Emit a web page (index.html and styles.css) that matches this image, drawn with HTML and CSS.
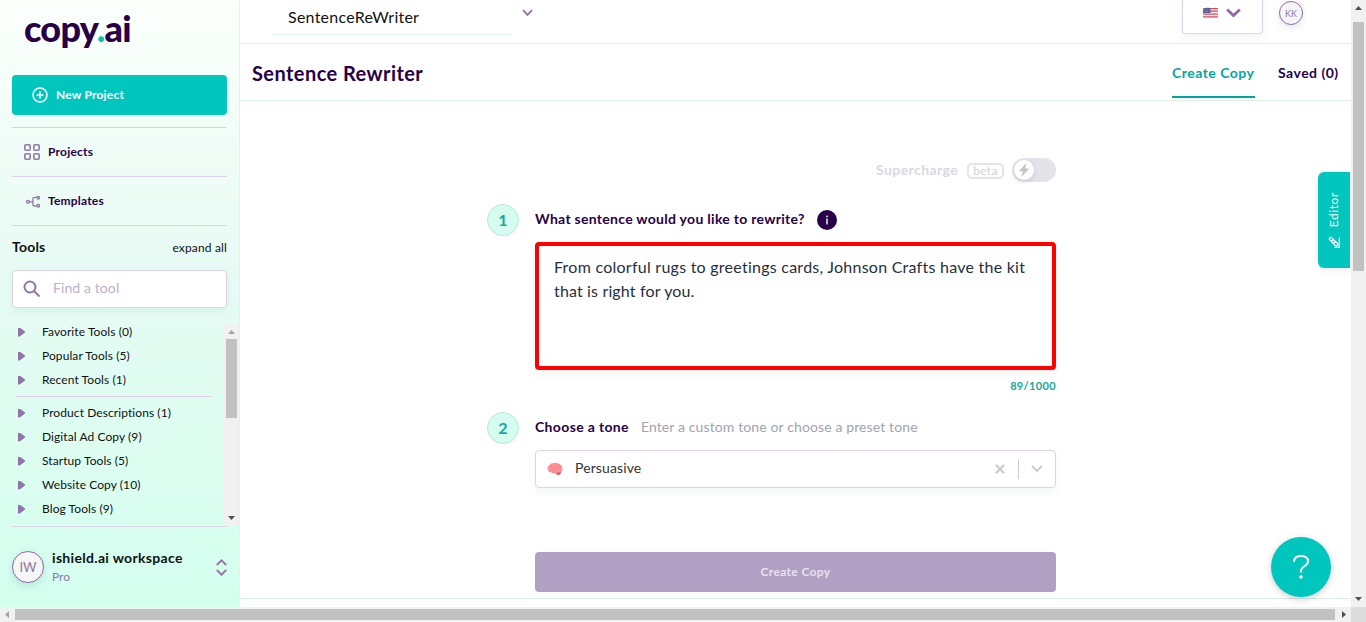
FILE: index.html
```html
<!DOCTYPE html>
<html lang="en">
<head>
<meta charset="utf-8">
<title>Sentence Rewriter</title>
<link rel="stylesheet" href="styles.css">
</head>
<body>
<div class="app">
  <aside class="sidebar">
    <div class="logo">copy<span class="logo-dot">.</span>ai</div>
    <button class="new-project">
      <svg width="16" height="16" viewBox="0 0 16 16" fill="none" stroke="#fff" stroke-width="1.5"><circle cx="8" cy="8" r="7"/><path d="M8 4.6v6.8M4.6 8h6.8"/></svg>
      <span class="t-new">New Project</span>
    </button>
    <nav class="nav">
      <a class="nav-item">
        <svg width="16" height="16" viewBox="0 0 16 16" fill="none" stroke="#8f77a5" stroke-width="1.6"><rect x=".8" y=".8" width="5.4" height="5.4" rx="1.3"/><rect x="9.8" y=".8" width="5.4" height="5.4" rx="1.3"/><rect x=".8" y="9.8" width="5.4" height="5.4" rx="1.3"/><rect x="9.8" y="9.8" width="5.4" height="5.4" rx="1.3"/></svg>
        <span class="t-projects">Projects</span>
      </a>
      <a class="nav-item">
        <svg width="16" height="16" viewBox="0 0 16 16" fill="none" stroke="#8f77a5" stroke-width="1.3"><circle cx="4" cy="8.8" r="1.4"/><circle cx="14.2" cy="4.8" r="1.3"/><circle cx="14.2" cy="12.7" r="1.3"/><path d="M5.4 8.800h3.400M12.800 4.400h-2.200q-1.700 0-1.700 1.700v5.200q0 1.700 1.700 1.700h2.200"/></svg>
        <span class="t-templates">Templates</span>
      </a>
    </nav>
    <div class="tools-head"><span class="tools-title">Tools</span><span class="expand">expand all</span></div>
    <div class="search">
      <svg width="18" height="18" viewBox="0 0 18 18" fill="none" stroke="#8f77a5" stroke-width="2"><circle cx="7" cy="7" r="5.500"/><path d="M11 11l5.500 5.500"/></svg>
      <span class="t-find">Find a tool</span>
    </div>
    <div class="tool-area">
      <ul class="tool-list">
        <li>Favorite Tools (0)</li>
        <li>Popular Tools (5)</li>
        <li>Recent Tools (1)</li>
        <li class="sep"></li>
        <li>Product Descriptions (1)</li>
        <li>Digital Ad Copy (9)</li>
        <li>Startup Tools (5)</li>
        <li>Website Copy (10)</li>
        <li>Blog Tools (9)</li>
      </ul>
      <div class="list-scroll">
        <svg width="15" height="15" viewBox="0 0 15 15"><path d="M4 10h7L7.5 6z" fill="#a3a3a3"/></svg>
        <div class="list-thumb"></div>
        <svg class="push" width="15" height="15" viewBox="0 0 15 15"><path d="M4 5h7L7.5 9z" fill="#505050"/></svg>
      </div>
    </div>
    <div class="workspace">
      <div class="avatar">IW</div>
      <div class="ws-text"><div class="ws-name">ishield.ai workspace</div><div class="ws-plan">Pro</div></div>
      <svg width="11" height="17" viewBox="0 0 11 17" fill="none" stroke="#8f77a5" stroke-width="1.8"><path d="M.8 6L5.5 1.3 10.2 6M.8 11l4.7 4.7L10.2 11"/></svg>
    </div>
  </aside>
  <main class="main">
    <header class="topbar">
      <div class="project-name">SentenceReWriter</div>
      <svg class="name-caret" width="11" height="8" viewBox="0 0 11 8" fill="none" stroke="#8f77a5" stroke-width="1.9"><path d="M1 1.2l4.5 4.6L10 1.2"/></svg>
      <div class="lang">
        <svg width="15" height="12" viewBox="0 0 15 12"><path d="M0 1.5Q4 .2 7.5 1T15 .8V10.8Q11 12 7.5 11T0 11.5z" fill="#f3e9ec"/><path d="M7 1.6h8M7 4.2h8M0 7.2h15M0 9.8h15" stroke="#cf5264" stroke-width="1.3"/><path d="M0 1.4Q4 .2 7.5 1V6H0z" fill="#5a5a90"/><path d="M1 2.8h5.5M1 4.5h5.5" stroke="#b9b6d0" stroke-width=".6" stroke-dasharray=".8 .8"/></svg>
        <svg width="15" height="10" viewBox="0 0 15 10" fill="none" stroke="#8f6aa6" stroke-width="2.8"><path d="M1.2 1.5l6.3 6L13.8 1.5"/></svg>
      </div>
      <div class="user">KK</div>
    </header>
    <div class="titlebar">
      <h1>Sentence Rewriter</h1>
      <div class="tabs"><span class="tab active">Create Copy</span><span class="tab saved">Saved (0)</span></div>
    </div>
    <section class="form">
      <div class="super">
        <span class="super-label">Supercharge</span><span class="beta">beta</span>
        <span class="toggle"><span class="knob"><svg width="12" height="14" viewBox="0 0 12 14"><path d="M8.3 0L.7 8.2h4L3.4 14 11.3 5.4H7.2z" fill="#c5c5c8"/></svg></span></span>
      </div>
      <div class="step first">
        <span class="num">1</span><span class="question">What sentence would you like to rewrite?</span>
        <svg class="info" width="20" height="20" viewBox="0 0 20 20"><circle cx="10" cy="10" r="10" fill="#270048"/><circle cx="10" cy="6.4" r=".9" fill="#fff"/><path d="M10 8.4v6" stroke="#fff" stroke-width="1.4"/></svg>
      </div>
      <div class="sentence"><div class="line1">From colorful rugs to greetings cards, Johnson Crafts have the kit</div><div class="line2">that is right for you.</div></div>
      <div class="count">89/1000</div>
      <div class="step second"><span class="num">2</span><span class="choose">Choose a tone</span><span class="hint">Enter a custom tone or choose a preset tone</span></div>
      <div class="select">
        <svg width="16" height="14" viewBox="0 0 16 14"><path d="M1 8Q-.6 5 2.3 3.3 4 .6 7 1q3-1 5 1 3 .8 3.3 4 .8 3-1.3 4-.2 3-2.8 3-2.2-.1-2.7-2-2.500 1.300-4-.5Q1.500 10.500 1 8z" fill="#ff9298"/><path d="M9 10.500q3 .5 5-1-.2 3.400-2.800 3.500Q9.200 12.500 9 10.500z" fill="#d9606c"/><path d="M3 5q2-2 3 0t3-1 4 1M3 8q2-1 3 .5t3-1 4 .5" fill="none" stroke="#e56c78" stroke-width=".8" stroke-dasharray="1 .7"/></svg>
        <span class="persuasive">Persuasive</span>
        <svg class="clear" width="10" height="10" viewBox="0 0 10 10" stroke="#ccc" stroke-width="2.200"><path d="M.8.8l8.400 8.400M9.200.8L.8 9.200"/></svg>
        <i class="bar"></i>
        <svg width="12" height="8" viewBox="0 0 12 8" fill="none" stroke="#ccc" stroke-width="2"><path d="M1 1l5 5 5-5"/></svg>
      </div>
      <button class="create"><span class="t-create">Create Copy</span></button>
    </section>
    <div class="editor-tab">
      <span class="t-editor">Editor</span>
      <svg width="12" height="12" viewBox="0 0 12 12" fill="none" stroke="#fff" stroke-width="1.200"><path d="M1.300 3.200Q1.200 1.200 3.200 1.400L9.600 7.500v2.200H7.400zM3.500 5.200l2-1.900M5.500 7.200l2-1.900M11.300 1.500v9.800H6"/></svg>
    </div>
    <div class="help"><svg width="18" height="26" viewBox="0 0 18 26" fill="none" stroke="#fff" stroke-width="2"><path d="M2 8Q2 2 9 2t7 5.500c0 4.500-7 4.500-7 9.500v1.500"/><circle cx="9" cy="23" r="1.700" fill="#fff" stroke="none"/></svg></div>
  </main>
  <div class="vscroll">
    <svg width="15" height="15" viewBox="0 0 15 15"><path d="M4 10h7L7.500 6z" fill="#505050"/></svg>
    <div class="vthumb"></div>
    <svg class="push" width="15" height="15" viewBox="0 0 15 15"><path d="M4 5h7L7.500 9z" fill="#505050"/></svg>
  </div>
  <div class="hscroll">
    <svg width="15" height="15" viewBox="0 0 15 15"><path d="M9 4v7L5 7.500z" fill="#a3a3a3"/></svg>
    <div class="hthumb"></div>
    <svg width="16" height="15" viewBox="0 0 16 15"><path d="M7 4v7l4-3.500z" fill="#505050"/></svg>
  </div>
  <div class="corner"></div>
</div>
</body>
</html>
```

FILE: styles.css
```css
* { box-sizing: border-box; }
body { margin: 0; font-family: Lato, sans-serif; font-size: 13px; color: #111; overflow: hidden; font-variant-ligatures: none; }
svg { display: block; flex: none; }
button { border: 0; font: inherit; }
span, div, li { white-space: nowrap; }
.app { width: 1366px; height: 622px; display: grid; grid-template-columns: 240px 1111px 15px; grid-template-rows: 607px 15px; }

.sidebar { padding: 0 12px; border-right: 1px solid #dff5ea; background: linear-gradient(#fbfffb, #e8fbf4 42%, #d3ffee); display: flex; flex-direction: column; }
.logo { height: 75px; padding: 6px 0 0 12px; font-size: 36px; line-height: 44px; font-weight: 900; letter-spacing: -.75px; color: #270048; }
.logo-dot { color: #00c4bb; }
.new-project { width: 215px; height: 40px; padding: 0 20px; border-radius: 4px; background: #00c6be; display: flex; align-items: center; gap: 8px; color: #fff; font-size: 12px; font-weight: 700; letter-spacing: .2px; }
.t-new, .t-projects, .t-templates { padding-bottom: 1px; }
.nav { margin-top: 12px; width: 215px; border-top: 1px solid #ddd2e6; }
.nav-item { height: 49px; padding-left: 12px; display: flex; align-items: center; gap: 8px; border-bottom: 1px solid #ddd2e6; font-size: 12px; font-weight: 700; letter-spacing: .2px; color: #270048; }
.tools-head { width: 215px; height: 44px; display: flex; align-items: center; justify-content: space-between; color: #111; }
.tools-title { font-weight: 700; font-size: 14px; letter-spacing: .2px; padding-bottom: 3px; }
.expand { font-size: 12px; letter-spacing: .15px; padding-bottom: 1px; }
.search { width: 215px; height: 38px; border: 1px solid #ddd2e6; border-radius: 4px; background: #fff; padding-left: 10px; display: flex; align-items: center; gap: 12px; color: #bdb0cc; font-size: 14px; letter-spacing: .1px; box-shadow: 0 3px 8px rgba(0, 100, 80, .07); }
.t-find { padding-bottom: 3px; }
.tool-area { margin: 16px -12px 0 0; height: 202px; display: flex; overflow: hidden; }
.tool-list { list-style: none; margin: -4px 0 0; padding: 0 0 0 4px; width: 212px; }
.tool-list li { height: 24px; line-height: 24px; display: flex; align-items: center; font-size: 12px; letter-spacing: .08px; }
.tool-list li::before { content: ""; flex: none; width: 7px; height: 9px; margin: 0 17px 0 2px; background: #8f77a5; clip-path: polygon(0 0, 25% 0, 100% 45%, 100% 55%, 25% 100%, 0 100%); }
.tool-list .sep { height: 1px; margin: 4px 12px 4px 0; width: 196px; background: #e1cde6; }
.tool-list .sep::before { display: none; }
.list-scroll { width: 15px; background: #f1f1f1; display: flex; flex-direction: column; }
.list-thumb { width: 11px; height: 79px; margin-left: 2px; background: #c1c1c1; }
.push { margin-top: auto; }
.workspace { width: 215px; border-top: 1px solid #ddd2e6; height: 81px; display: flex; align-items: center; }
.avatar { width: 32px; height: 32px; border: 1px solid #8f6aa6; border-radius: 50%; background: #f6f6f6; color: #8f77a5; font-size: 13px; display: grid; place-items: center; box-shadow: 0 3px 7px rgba(0, 80, 70, .15); }
.ws-text { flex: 1; padding-left: 8px; }
.ws-name { font-size: 14px; line-height: 18px; font-weight: 700; letter-spacing: .32px; color: #111; }
.ws-plan { font-size: 12px; line-height: 18px; padding-top: 1px; margin-bottom: -1px; color: #8f77a5; }

.main { position: relative; background: #fff; overflow: hidden; }
.topbar { height: 44px; border-bottom: 1px solid #dcf1e3; display: flex; align-items: flex-start; }
.project-name { width: 240px; height: 35px; margin-left: 32px; padding-left: 16px; line-height: 34px; border-bottom: 1px solid #e4f8e8; font-size: 16px; letter-spacing: .25px; }
.name-caret { margin: 9px 0 0 10px; }
.lang { width: 81px; height: 34px; margin-left: 649px; border: 1px solid #ddd2e6; border-top: 0; border-radius: 0 0 4px 4px; padding: 7px 0 0 20px; display: flex; gap: 8px; box-shadow: 0 3px 8px rgba(0, 100, 80, .07); }
.lang svg:last-child { margin-top: 1px; }
.user { width: 24px; height: 24px; margin: 1px 0 0 16px; border: 1px solid #8f6aa6; border-radius: 50%; background: #f6f6f6; color: #8f77a5; font-size: 9px; display: grid; place-items: center; box-shadow: 0 3px 7px rgba(0, 80, 70, .12); }
.titlebar { height: 57px; border-bottom: 1px solid #dcf1e3; padding: 0 12px; display: flex; justify-content: space-between; }
h1 { margin: 0; font-size: 20px; line-height: 58px; font-weight: 700; letter-spacing: .43px; color: #270048; }
.tabs { display: flex; gap: 23px; font-size: 14px; font-weight: 700; letter-spacing: .48px; color: #270048; }
.tab { height: 54px; line-height: 58px; }
.tab.active { width: 83px; color: #00a79d; border-bottom: 2px solid #00a79d; }
.tab.saved { width: 61px; }
.form { height: 498px; border-bottom: 1px solid #dcebea; padding: 57px 295px 0 247px; }
.super { height: 24px; display: flex; align-items: center; justify-content: flex-end; }
.super-label { font-size: 14px; font-weight: 700; letter-spacing: .42px; color: #d8d9e0; width: 83px; padding-bottom: 1px; }
.beta { width: 37px; height: 16px; margin: 1px 8px 0; border: 2px solid #e4e3ea; border-radius: 5px; font-size: 12px; line-height: 12px; text-align: center; letter-spacing: .3px; color: #d0d0da; }
.toggle { width: 44px; height: 24px; border-radius: 12px; background: #e4e3ea; padding: 2px; }
.knob { width: 20px; height: 20px; border-radius: 50%; background: #fff; display: grid; place-items: center; box-shadow: 0 2px 5px rgba(0, 80, 70, .15); }
.step { height: 32px; display: flex; align-items: center; color: #270048; font-weight: 700; font-size: 14px; }
.first { margin-top: 22px; }
.num { width: 32px; height: 32px; margin-right: 16px; border: 1px solid #b2ebe2; border-radius: 50%; background: #d5fcef; color: #14aaa2; font-size: 16px; display: grid; place-items: center; padding-bottom: 2px; }
.question { letter-spacing: .29px; padding-bottom: 3px; }
.choose { letter-spacing: .35px; padding-bottom: 3px; }
.info { margin-left: 12px; }
.sentence { margin: 6px 0 0 48px; width: 521px; height: 128px; border: 4px solid #f00; border-radius: 4px; padding: 9px 15px; font-size: 16px; line-height: 24px; letter-spacing: .25px; color: #252f3f; box-shadow: 0 4px 8px rgba(0, 100, 80, .07); }
.line2 { letter-spacing: .15px; }
.count { height: 32px; line-height: 32px; text-align: right; font-size: 11px; font-weight: 700; letter-spacing: .35px; color: #14a79c; }
.second { margin-top: 10px; }
.hint { margin-left: 12px; font-weight: 400; letter-spacing: .12px; color: #a0a3b1; padding-bottom: 3px; }
.select { margin: 6px 0 0 48px; width: 521px; height: 38px; border: 1px solid #ddd2e6; border-radius: 4px; padding: 0 12px 0 11px; display: flex; align-items: center; color: #333; font-size: 14px; letter-spacing: .12px; box-shadow: 0 4px 8px rgba(0, 100, 80, .06); }
.persuasive { margin-left: 12px; padding-bottom: 3px; }
.clear { margin-left: auto; }
.bar { width: 1px; height: 20px; margin: 0 12px 0 13px; background: #ccc; }
.create { display: block; margin: 64px 0 0 48px; padding: 0 0 2px; width: 521px; height: 40px; border-radius: 4px; background: #b2a0c4; color: #e9e2ef; font-size: 12px; font-weight: 700; letter-spacing: .36px; }
.editor-tab { position: absolute; right: 1px; top: 172px; width: 32px; height: 96px; border-radius: 6px 0 0 6px; background: #00c6be; color: #fff; display: flex; flex-direction: column; align-items: center; justify-content: center; gap: 9px; box-shadow: 0 2px 8px rgba(0, 0, 0, .08); }
.t-editor { writing-mode: vertical-rl; transform: rotate(180deg); font-size: 12px; letter-spacing: .6px; margin-right: 2px; }
.help { position: absolute; left: 1031px; top: 537px; width: 60px; height: 60px; border-radius: 50%; background: #00c6be; display: grid; place-items: center; box-shadow: 0 2px 7px rgba(0, 0, 0, .2); }

.vscroll { background: #f1f1f1; display: flex; flex-direction: column; }
.vthumb { width: 11px; height: 249px; margin: 7px 0 0 2px; background: #c1c1c1; }
.hscroll { grid-column: 1 / 3; background: #f1f1f1; display: flex; }
.hthumb { width: 1320px; height: 11px; margin-top: 2px; background: #c1c1c1; }
.corner { background: #dcdcdc; }
```
